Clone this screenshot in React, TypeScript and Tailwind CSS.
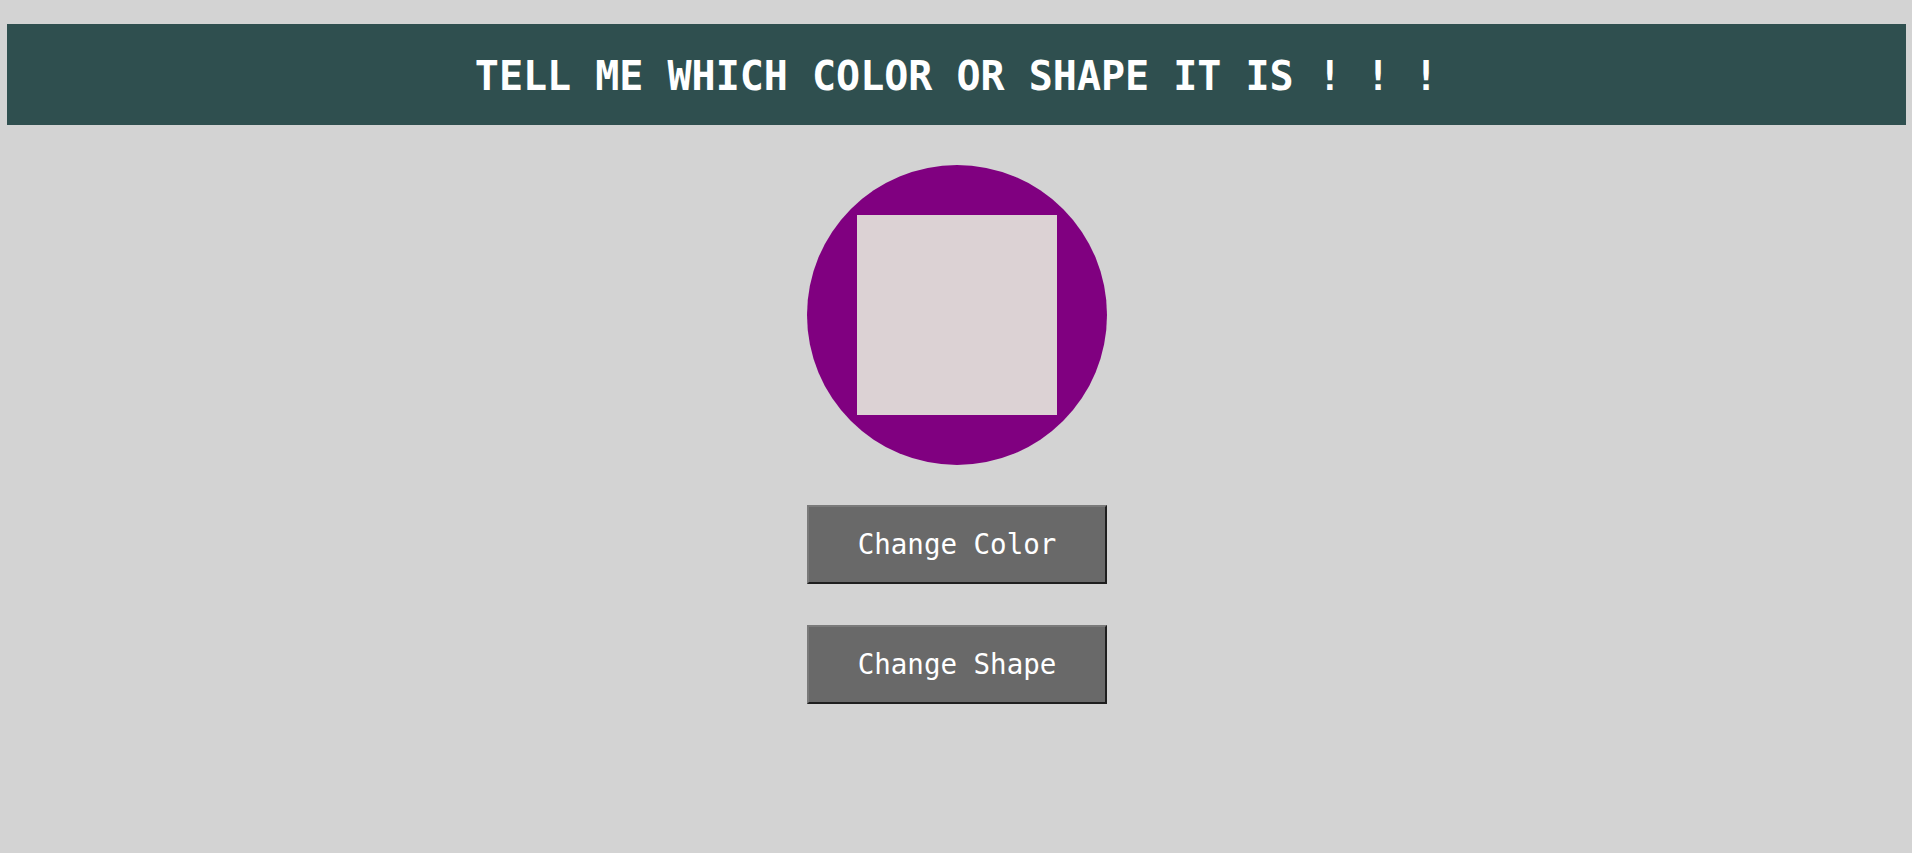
export default function App() {
  return (
    <div className="min-h-screen bg-[#d3d3d3] pt-[24px] font-['DejaVu_Sans_Mono',monospace]">
      {/* Title bar */}
      <header className="ml-[7px] mr-[6px] h-[101px] bg-[#2f4f4f] flex items-center justify-center">
        <h1 className="text-[40px] font-bold text-white leading-none pt-[2px]">
          TELL ME WHICH COLOR OR SHAPE IT IS ! ! !
        </h1>
      </header>

      <main className="flex flex-col items-center pt-[40px] pl-[2px]">
        {/* Shape */}
        <div className="w-[300px] h-[300px] rounded-full bg-[#800080] flex items-center justify-center">
          <div className="w-[200px] h-[200px] bg-[#dcd2d4]" />
        </div>

        <div className="mt-[40px] flex flex-col gap-[41px]">
          <button className="w-[300px] h-[79px] bg-[#696969] text-white text-[27.5px] border-2 border-t-[#7a7a7a] border-l-[#7a7a7a] border-b-[#1f1f1f] border-r-[#1f1f1f]">
            Change Color
          </button>
          <button className="w-[300px] h-[79px] bg-[#696969] text-white text-[27.5px] border-2 border-t-[#7a7a7a] border-l-[#7a7a7a] border-b-[#1f1f1f] border-r-[#1f1f1f]">
            Change Shape
          </button>
        </div>
      </main>
    </div>
  );
}
